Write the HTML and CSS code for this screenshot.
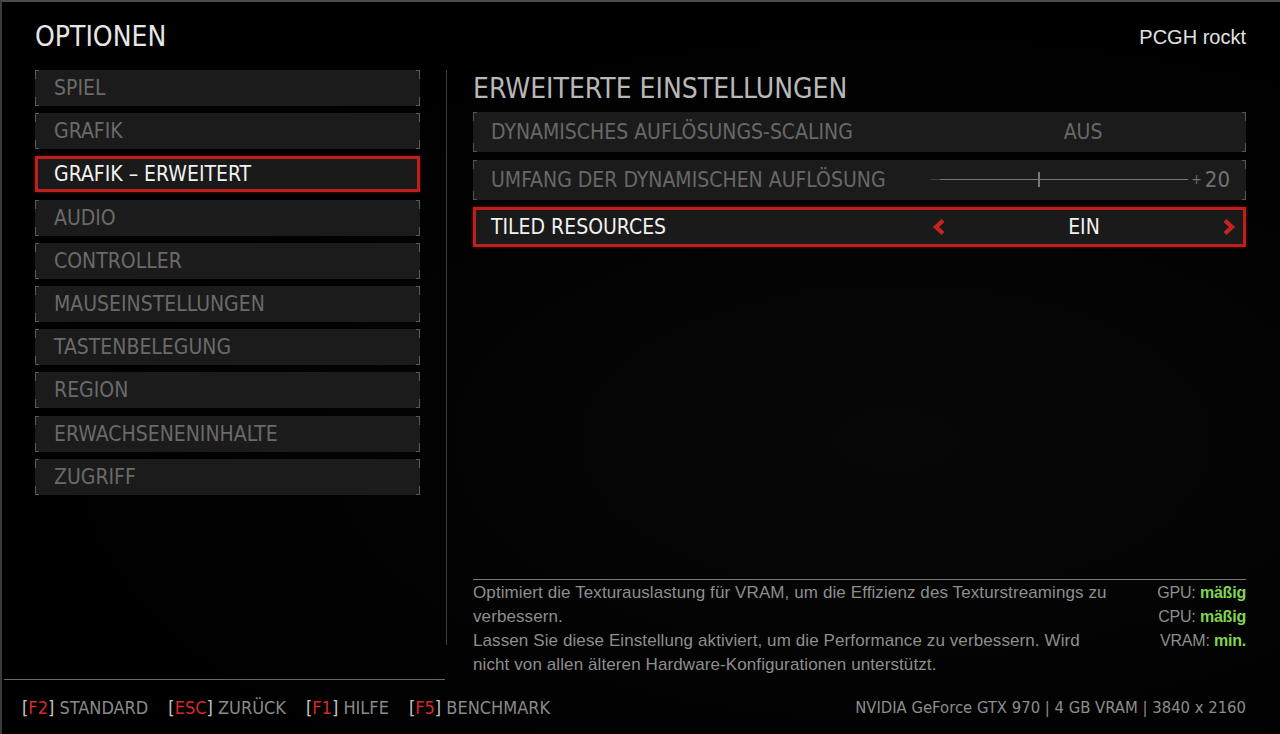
FILE: index.html
```html
<!DOCTYPE html>
<html lang="de">
<head>
    <meta charset="UTF-8">
    <meta name="viewport" content="width=device-width, initial-scale=1.0">
    <title>Optionen</title>
    <link rel="stylesheet" href="styles.css">
</head>
<body>

<div class="screen">
    <header class="top">
        <h1 class="title">OPTIONEN</h1>
        <span class="user">PCGH rockt</span>
    </header>

    <div class="main">
        <!-- Categories -->
        <nav class="menu">
            <div class="menu-item">SPIEL</div>
            <div class="menu-item">GRAFIK</div>
            <div class="menu-item active">GRAFIK – ERWEITERT</div>
            <div class="menu-item">AUDIO</div>
            <div class="menu-item">CONTROLLER</div>
            <div class="menu-item">MAUSEINSTELLUNGEN</div>
            <div class="menu-item">TASTENBELEGUNG</div>
            <div class="menu-item">REGION</div>
            <div class="menu-item">ERWACHSENENINHALTE</div>
            <div class="menu-item">ZUGRIFF</div>
        </nav>

        <div class="divider"></div>

        <!-- Settings of the selected category -->
        <section class="panel">
            <h2 class="panel-title">ERWEITERTE EINSTELLUNGEN</h2>

            <div class="settings">
                <div class="setting">
                    <span class="label">DYNAMISCHES AUFLÖSUNGS-SCALING</span>
                    <div class="value">AUS</div>
                </div>
                <div class="setting">
                    <span class="label">UMFANG DER DYNAMISCHEN AUFLÖSUNG</span>
                    <div class="value slider">
                        <div class="track"><span class="thumb" style="left: 42%"></span></div>
                        <span class="num"><small>+</small>20</span>
                    </div>
                </div>
                <div class="setting active">
                    <span class="label">TILED RESOURCES</span>
                    <div class="value picker">
                        <svg class="chev" width="14" height="16" viewBox="0 0 14 16"><path d="M11 1.5 L4 8 L11 14.5" fill="none" stroke="#c8221e" stroke-width="4.2"/></svg>
                        <span>EIN</span>
                        <svg class="chev" width="14" height="16" viewBox="0 0 14 16"><path d="M3 1.5 L10 8 L3 14.5" fill="none" stroke="#c8221e" stroke-width="4.2"/></svg>
                    </div>
                </div>
            </div>

            <div class="info">
                <div class="desc">
                    Optimiert die Texturauslastung für VRAM, um die Effizienz des Texturstreamings zu<br>
                    verbessern.<br>
                    Lassen Sie diese Einstellung aktiviert, um die Performance zu verbessern. Wird<br>
                    nicht von allen älteren Hardware-Konfigurationen unterstützt.
                </div>
                <div class="cost">
                    <div>GPU: <b>mäßig</b></div>
                    <div>CPU: <b>mäßig</b></div>
                    <div>VRAM: <b>min.</b></div>
                </div>
            </div>
        </section>
    </div>

    <footer class="bottom">
        <div class="rule"></div>
        <div class="bar">
            <div class="keys">
                <span class="key"><i>[</i><em>F2</em><i>]</i> STANDARD</span>
                <span class="key"><i>[</i><em>ESC</em><i>]</i> ZURÜCK</span>
                <span class="key"><i>[</i><em>F1</em><i>]</i> HILFE</span>
                <span class="key"><i>[</i><em>F5</em><i>]</i> BENCHMARK</span>
            </div>
            <div class="system">NVIDIA GeForce GTX 970 | 4 GB VRAM | 3840 x 2160</div>
        </div>
    </footer>
</div>

</body>
</html>
```

FILE: styles.css
```css
body {
    margin: 0;
    padding: 0;
    background-color: #000;
    font-family: "Liberation Sans Narrow", "DejaVu Sans Condensed", "Liberation Sans", sans-serif;
}
.screen {
    box-sizing: border-box;
    width: 1280px;
    height: 734px;
    border-top: 2px solid #4a4a4a;
    border-left: 2px solid #3a3a3a;
    background: radial-gradient(ellipse at 70% 60%, #070707 0%, #000 70%);
    display: flex;
    flex-direction: column;
}

/* header */
.top {
    display: flex;
    justify-content: space-between;
    align-items: baseline;
    height: 68px;
    box-sizing: border-box;
    padding: 19px 34px 0 33px;
}
.title {
    margin: 0;
    font-size: 28px;
    line-height: 32px;
    font-weight: normal;
    color: #e6e6e6;
}
.user {
    font-family: "Liberation Sans", sans-serif;
    font-size: 20px;
    color: #e2e2e2;
    position: relative;
    top: -2px;
}

/* main area */
.main {
    flex: 1;
    display: grid;
    grid-template-columns: 385px 1px 773px;
    column-gap: 26px;
    padding-left: 33px;
    margin-bottom: 2px;
}
.menu {
    display: flex;
    flex-direction: column;
    gap: 7.2px;
}
.menu-item {
    height: 36px;
    box-sizing: border-box;
    display: flex;
    align-items: center;
    padding-left: 19px;
    font-size: 21px;
    color: #6a6a6a;
    background-color: #1b1b1b;
    /* corner brackets */
    background-image:
        linear-gradient(#5a5a5a, #5a5a5a), linear-gradient(#5a5a5a, #5a5a5a),
        linear-gradient(#5a5a5a, #5a5a5a), linear-gradient(#5a5a5a, #5a5a5a),
        linear-gradient(#5a5a5a, #5a5a5a), linear-gradient(#5a5a5a, #5a5a5a),
        linear-gradient(#5a5a5a, #5a5a5a), linear-gradient(#5a5a5a, #5a5a5a);
    background-size: 1px 9px, 4px 1px, 1px 9px, 4px 1px, 1px 9px, 4px 1px, 1px 9px, 4px 1px;
    background-position: left top, left top, left bottom, left bottom,
        right top, right top, right bottom, right bottom;
    background-repeat: no-repeat;
}
.menu-item.active {
    background-image: none;
    background-color: #1a1a1a;
    border: 3px solid #bd201c;
    box-shadow: 0 0 3px rgba(190, 30, 25, 0.6);
    padding-left: 16px;
    color: #f2f2f2;
}
.divider {
    height: 575px;
    background-color: #3c3c3c;
}

/* settings panel */
.panel {
    display: flex;
    flex-direction: column;
}
.panel-title {
    margin: 3px 0 7px;
    font-size: 28px;
    line-height: 32px;
    font-weight: normal;
    color: #b8b8b8;
}
.settings {
    display: flex;
    flex-direction: column;
    gap: 7.5px;
}
.setting {
    height: 40px;
    box-sizing: border-box;
    display: grid;
    grid-template-columns: 1fr 306px;
    align-items: center;
    padding: 0 10px 0 18px;
    font-size: 21px;
    color: #686868;
    background-color: #1b1b1b;
    background-image:
        linear-gradient(#555, #555), linear-gradient(#555, #555),
        linear-gradient(#555, #555), linear-gradient(#555, #555),
        linear-gradient(#555, #555), linear-gradient(#555, #555),
        linear-gradient(#555, #555), linear-gradient(#555, #555);
    background-size: 1px 9px, 4px 1px, 1px 9px, 4px 1px, 1px 9px, 4px 1px, 1px 9px, 4px 1px;
    background-position: left top, left top, left bottom, left bottom,
        right top, right top, right bottom, right bottom;
    background-repeat: no-repeat;
}
.setting.active {
    background-image: none;
    background-color: #1a1a1a;
    border: 3px solid #bd201c;
    box-shadow: 0 0 3px rgba(190, 30, 25, 0.6);
    padding: 0 7px 0 15px;
    color: #f2f2f2;
}
.value {
    text-align: center;
}
.slider {
    display: flex;
    align-items: center;
    gap: 3px;
    padding-right: 6px;
}
.track {
    position: relative;
    flex: 1;
    height: 1px;
    background: linear-gradient(to right, #3e3e3e 0 10px, #777 10px);
}
.thumb {
    position: absolute;
    top: -7px;
    width: 2px;
    height: 15px;
    background-color: #777;
}
.num {
    font-size: 22px;
    color: #727272;
}
.num small {
    font-size: 14px;
    margin-right: 3px;
    vertical-align: 3px;
}
.picker {
    display: flex;
    justify-content: space-between;
    align-items: center;
    padding: 0 0 0 2px;
}
.chev {
    display: block;
}

/* description at the bottom */
.info {
    margin-top: auto;
    border-top: 1px solid #7a7a7a;
    padding-top: 1px;
    display: flex;
    justify-content: space-between;
    font-family: "Liberation Sans", sans-serif;
    font-size: 17px;
    line-height: 24px;
    letter-spacing: 0.1px;
    color: #8e8e8e;
}
.cost {
    text-align: right;
    font-size: 16px;
    letter-spacing: -0.2px;
}
.cost b {
    font-weight: bold;
    color: #7fd651;
}

/* footer */
.bottom {
    height: 55px;
    display: flex;
    flex-direction: column;
}
.rule {
    width: 441px;
    height: 1px;
    margin-left: 2px;
    background-color: #686868;
}
.bar {
    flex: 1;
    display: flex;
    justify-content: space-between;
    align-items: center;
    padding: 0 34px 0 20px;
    font-size: 18px;
    color: #8a8a8a;
}
.keys {
    display: flex;
    gap: 20px;
}
.key i {
    font-style: normal;
    color: #c6c6c6;
}
.key em {
    font-style: normal;
    color: #d8282a;
}
.system {
    font-size: 16.5px;
    color: #8c8c8c;
}
```
